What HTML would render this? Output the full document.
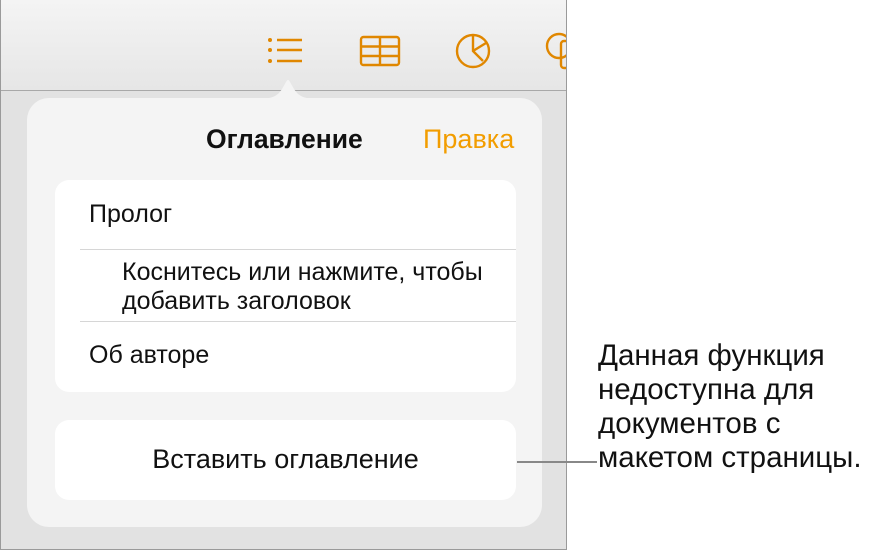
<!DOCTYPE html><html><head><meta charset="utf-8"><style>
body{margin:0;width:876px;height:553px;background:#fff;font-family:"Liberation Sans",sans-serif;position:relative;overflow:hidden}
.frame{position:absolute;left:0;top:0;width:565px;height:549px;border:1px solid #9a9a9a;border-top:none;background:#e2e2e2;overflow:hidden}
.tb{position:absolute;left:0;top:0;width:565px;height:90px;background:linear-gradient(#f4f4f4,#e6e6e6);border-bottom:1px solid #a8a8a8}
.pop{position:absolute;left:26px;top:98px;width:515px;height:429px;background:#f4f4f4;border-radius:22px}
.card{position:absolute;left:28px;width:461px;background:#fff;border-radius:14px}
.t{position:absolute;font-size:25px;color:#111;white-space:nowrap}
.sep{position:absolute;left:25px;right:0;height:1px;background:#d6d6d6}
.note{position:absolute;left:598px;top:339px;font-size:29.5px;line-height:34px;color:#111;white-space:nowrap}
</style></head><body>
<div class="frame">
<div class="tb">
<svg width="565" height="90" style="position:absolute;left:0;top:0" fill="none" stroke="#e08700" stroke-width="2.4">
<circle cx="269" cy="40" r="2" fill="#e08700" stroke="none"/><circle cx="269" cy="50" r="2" fill="#e08700" stroke="none"/><circle cx="269" cy="61" r="2" fill="#e08700" stroke="none"/>
<path d="M276 40h25M276 50h25M276 61h25"/>
<rect x="360" y="37" width="38" height="28" rx="2.5"/><path d="M360 46.5h38M360 56h38M379 37v28"/>
<circle cx="472" cy="51" r="16"/><path d="M472 35v16l10 10M472 51l13-8"/>
<circle cx="558" cy="46" r="12"/><rect x="560" y="41" width="16" height="27" rx="3"/>
</svg>
</div>
<svg width="60" height="24" style="position:absolute;left:257px;top:76px"><path d="M0 23 C16 23 20 19 24 13 L28 6 Q30 2 32 6 L36 13 C40 19 44 23 60 23Z" fill="#f4f4f4"/></svg>
<div class="pop">
<div class="t" style="left:179px;top:26px;font-weight:bold;font-size:26.5px">Оглавление</div>
<div class="t" style="left:396px;top:26px;color:#f29d00;font-size:27px">Правка</div>
<div class="card" style="top:82px;height:212px">
<div class="t" style="left:34px;top:20px;font-size:25px">Пролог</div>
<div class="sep" style="top:69px"></div>
<div class="t" style="left:67px;top:78px;font-size:25px;line-height:29px">Коснитесь или нажмите, чтобы<br>добавить заголовок</div>
<div class="sep" style="top:141px"></div>
<div class="t" style="left:34px;top:161px;font-size:25px">Об авторе</div>
</div>
<div class="card" style="top:322px;height:80px">
<div class="t" style="left:0;width:461px;text-align:center;top:24px;font-size:27px">Вставить оглавление</div>
</div>
</div>
</div>
<div style="position:absolute;left:517px;top:461px;width:80px;height:2px;background:#888"></div>
<div class="note">Данная функция<br>недоступна для<br>документов с<br>макетом страницы.</div>
</body></html>
